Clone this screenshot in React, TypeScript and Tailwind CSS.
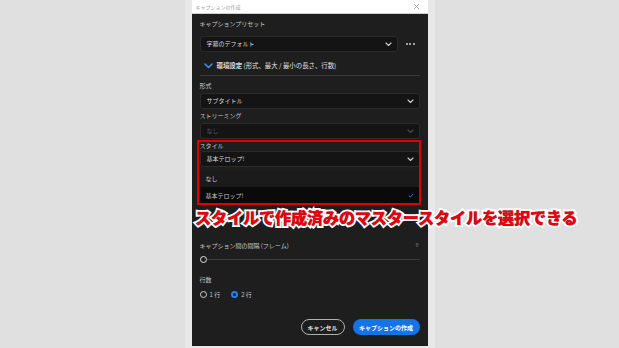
import React from "react";

const font = { fontFamily: '"Noto Sans CJK JP", "Noto Sans", sans-serif' };

function Chevron({ className = "" }: { className?: string }) {
  return (
    <svg width="7" height="5" viewBox="0 0 7 5" className={className}>
      <path d="M1 1 L3.5 3.5 L6 1" fill="none" stroke="currentColor" strokeWidth="1.1" strokeLinecap="round" strokeLinejoin="round" />
    </svg>
  );
}

function Select({ text, disabled = false, className = "" }: { text: string; disabled?: boolean; className?: string }) {
  return (
    <div className={`flex h-[16px] items-center justify-between rounded-[3px] border border-[#2a2a2a] bg-[#141414] pl-[6px] pr-[5px] ${className}`}>
      <span className={`text-[6px] leading-none ${disabled ? "text-[#5a5a5a]" : "text-[#dcdcdc]"}`}>{text}</span>
      <Chevron className={disabled ? "text-[#4a4a4a]" : "text-[#d0d0d0]"} />
    </div>
  );
}

function Label({ text, className = "" }: { text: string; className?: string }) {
  return <div className={`h-[10px] text-[6px] leading-[10px] text-[#c8c8c8] ${className}`}>{text}</div>;
}

export default function App() {
  return (
    <div className="relative flex h-[348px] w-[619px] justify-center overflow-hidden bg-[#e0e0e0]" style={font}>
      <div className="flex h-[346px] w-[236px] flex-col bg-[#1e1e1e] shadow-[0_0_0_7px_#e8e8e8]">
        <div className="flex h-[14px] items-center justify-between border-b border-[#d0d0d0] bg-white pl-[4px] pr-[8px]">
          <span className="text-[5px] leading-none text-[#9a9a9a]">キャプションの作成</span>
          <svg width="7" height="7" viewBox="0 0 7 7">
            <path d="M1 1 L6 6 M6 1 L1 6" stroke="#9a9a9a" strokeWidth="0.8" />
          </svg>
        </div>
        <div className="flex flex-col px-[8px]">
          <Label text="キャプションプリセット" className="mt-[5px]" />
          <div className="mt-[7px] flex items-center">
            <Select text="字幕のデフォルト" className="flex-1" />
            <div className="flex w-[22px] items-center justify-center gap-[1.5px] pl-[3px]">
              <span className="h-[2px] w-[2px] rounded-full bg-[#cfcfcf]" />
              <span className="h-[2px] w-[2px] rounded-full bg-[#cfcfcf]" />
              <span className="h-[2px] w-[2px] rounded-full bg-[#cfcfcf]" />
            </div>
          </div>
          <div className="mt-[8px] flex h-[12px] items-center pl-[4px]">
            <svg width="9" height="6" viewBox="0 0 9 6" className="text-[#3b8eea]">
              <path d="M1 1 L4.5 4.5 L8 1" fill="none" stroke="currentColor" strokeWidth="1.6" strokeLinecap="round" strokeLinejoin="round" />
            </svg>
            <span className="ml-[4px] text-[6.4px] leading-none text-[#e0e0e0]">
              <span className="font-bold">環境設定</span> (形式、最大 / 最小の長さ、行数)
            </span>
          </div>
          <div className="mt-[3px] h-px bg-[#3a3a3a]" />
          <Label text="形式" className="mt-[5px]" />
          <Select text="サブタイトル" className="mt-[2px]" />
          <Label text="ストリーミング" className="mt-[2px]" />
          <Select text="なし" disabled className="mt-[2px]" />
          <div className="relative mt-[2px]">
            <Label text="スタイル" />
            <Select text="基本テロップ!" />
            <div className="mt-[2px] flex flex-col">
              <div className="flex h-[18px] items-center bg-[#1b1b1b] pl-[6px] text-[6px] text-[#c8c8c8]">なし</div>
              <div className="flex h-[17px] items-center justify-between bg-[#0a0a0a] pl-[6px] pr-[6px] text-[6px] text-[#c8c8c8]">
                <span>基本テロップ!</span>
                <svg width="6" height="5" viewBox="0 0 6 5">
                  <path d="M0.8 2.6 L2.3 4 L5.2 0.8" fill="none" stroke="#3b8eea" strokeWidth="0.9" />
                </svg>
              </div>
            </div>
            <div className="pointer-events-none absolute -left-[3px] -right-[1px] -top-[1px] -bottom-[1px] border-2 border-[#e00000]" />
          </div>
          <div className="h-[36px]" />
          <div className="flex h-[10px] items-center justify-between text-[6px] text-[#c8c8c8]">
            <span>キャプション間の間隔 (フレーム)</span>
            <span className="pr-[1px] text-[5px] text-[#8a8a8a]">0</span>
          </div>
          <div className="mt-[4px] flex h-[10px] items-center">
            <div className="h-[7px] w-[7px] shrink-0 rounded-full border-[1.2px] border-[#e0e0e0] bg-[#1e1e1e]" />
            <div className="h-px flex-1 bg-[#3c3c3c]" />
          </div>
          <Label text="行数" className="mt-[11px] text-[6.5px]" />
          <div className="mt-[4px] flex h-[10px] items-center text-[6px] text-[#c8c8c8]">
            <div className="h-[7px] w-[7px] rounded-full border-[1.2px] border-[#d0d0d0]" />
            <span className="ml-[3px]">1 行</span>
            <div className="ml-[11px] flex h-[7px] w-[7px] items-center justify-center rounded-full bg-[#2680eb]">
              <div className="h-[3px] w-[3px] rounded-full bg-[#1e1e1e]" />
            </div>
            <span className="ml-[3px]">2 行</span>
          </div>
          <div className="mt-[20px] flex justify-end gap-[8px]">
            <div className="flex h-[16px] w-[44px] items-center justify-center rounded-full border border-[#b0b0b0] text-[6px] font-bold text-[#e0e0e0]">キャンセル</div>
            <div className="flex h-[16px] w-[67px] items-center justify-center rounded-full bg-[#1473e6] text-[6px] font-bold text-white">キャプションの作成</div>
          </div>
        </div>
      </div>
      <div className="absolute left-[195px] top-[206px] whitespace-nowrap text-[16.2px] font-black leading-[22px] tracking-[-0.2px] text-[#e8000f] [-webkit-text-stroke:4px_white] [paint-order:stroke_fill] [text-shadow:0_0_1px_#555]">
        スタイルで作成済みのマスタースタイルを選択できる
      </div>
    </div>
  );
}
